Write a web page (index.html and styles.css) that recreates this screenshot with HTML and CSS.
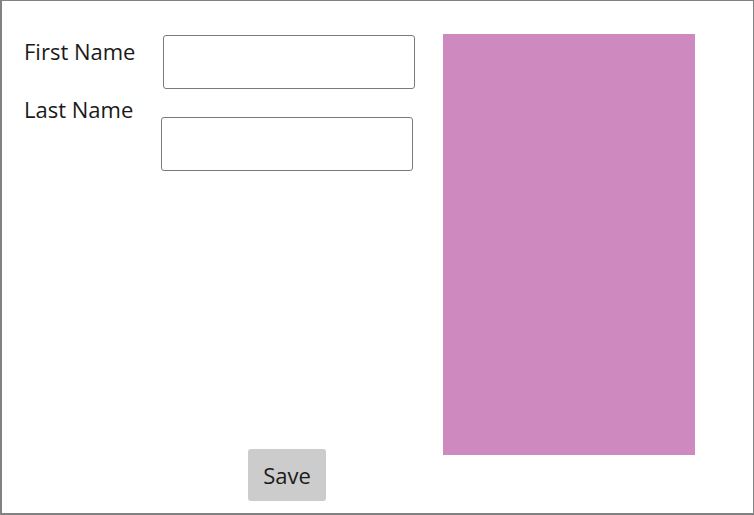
FILE: index.html
```html
<!DOCTYPE html>
<html>
<head>
<meta charset="utf-8">
<link rel="stylesheet" href="styles.css">
</head>
<body>
<div class="frame">
  <div class="main">
    <div class="labels">
      <label class="label label-first">First Name</label>
      <label class="label label-last">Last Name</label>
    </div>
    <div class="fields">
      <input class="field field-first" type="text">
      <input class="field field-last" type="text">
      <div class="actions">
        <button class="save" type="button">Save</button>
      </div>
    </div>
  </div>
  <div class="panel"></div>
</div>
</body>
</html>
```

FILE: styles.css
```css
html, body {
  margin: 0;
  padding: 0;
  background: #ffffff;
}

.frame {
  width: 754px;
  height: 515px;
  box-sizing: border-box;
  border: 1px solid #828282;
  border-left-width: 2px;
  border-bottom-width: 2px;
  display: flex;
  font-family: "Open Sans", "Noto Sans", sans-serif;
  color: #1a1a1a;
}

.main {
  width: 441px;
  box-sizing: border-box;
  padding: 34px 0 12px 22px;
  display: flex;
}

.labels {
  width: 139px;
  display: flex;
  flex-direction: column;
}

.label {
  font-size: 22px;
  line-height: 30px;
  height: 30px;
}

.label-first {
  margin-top: 1px;
}

.label-last {
  margin-top: 28px;
}

.fields {
  width: 254px;
  display: flex;
  flex-direction: column;
}

.field {
  width: 252px;
  height: 54px;
  box-sizing: border-box;
  border: 1.5px solid #7a7a7a;
  border-radius: 3px;
  background: #ffffff;
  margin: 0;
  padding: 0 8px;
  font: inherit;
  outline: none;
}

.field-last {
  margin: 28px 0 0 -2px;
}

.actions {
  margin-top: auto;
  display: flex;
  padding-left: 85px;
}

.save {
  width: 78px;
  height: 52px;
  border: none;
  border-radius: 3px;
  background: #cccccc;
  color: #1a1a1a;
  font-family: "Open Sans", "Noto Sans", sans-serif;
  font-size: 22px;
  padding: 0;
}

.panel {
  width: 252px;
  height: 421px;
  margin-top: 33px;
  background: #ce8abe;
}
```
